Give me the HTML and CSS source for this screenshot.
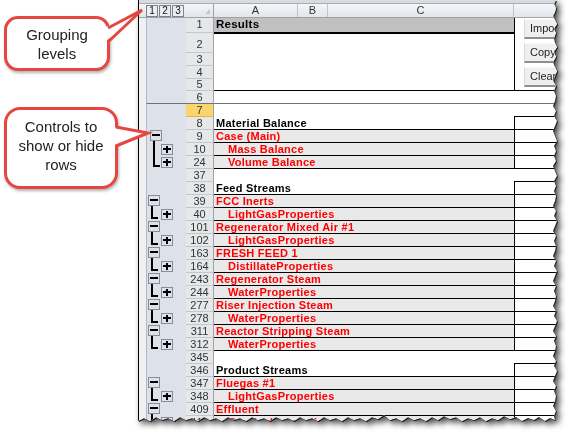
FILE: index.html
```html
<!DOCTYPE html>
<html>
<head>
<meta charset="utf-8">
<title>Grouping</title>
<link rel="stylesheet" href="styles.css">
</head>
<body>
<svg class="defs" xmlns="http://www.w3.org/2000/svg">
  <symbol id="mn" viewBox="0 0 40 13">
    <rect x="1.5" y="0.5" width="11" height="10" fill="none" stroke="#878c96"/>
    <rect x="3" y="4" width="8" height="2" fill="#000"/>
    <rect x="4" y="11" width="2" height="2" fill="#000"/>
  </symbol>
  <symbol id="mn1" viewBox="0 0 40 13">
    <rect x="3.5" y="0.5" width="11" height="10" fill="none" stroke="#878c96"/>
    <rect x="5" y="4" width="8" height="2" fill="#000"/>
    <rect x="6" y="11" width="2" height="2" fill="#000"/>
  </symbol>
  <symbol id="pe" viewBox="0 0 40 13">
    <rect x="4" y="0" width="2" height="11" fill="#000"/>
    <rect x="4" y="9" width="7" height="2" fill="#000"/>
    <rect x="14.5" y="1.5" width="11" height="10" fill="none" stroke="#878c96"/>
    <rect x="16" y="5" width="8" height="2" fill="#000"/>
    <rect x="19" y="3" width="2" height="7" fill="#000"/>
  </symbol>
  <symbol id="pm1" viewBox="0 0 40 13">
    <rect x="6" y="0" width="2" height="13" fill="#000"/>
    <rect x="14.5" y="1.5" width="11" height="10" fill="none" stroke="#878c96"/>
    <rect x="16" y="5" width="8" height="2" fill="#000"/>
    <rect x="19" y="3" width="2" height="7" fill="#000"/>
  </symbol>
  <symbol id="pe1" viewBox="0 0 40 13">
    <rect x="6" y="0" width="2" height="11" fill="#000"/>
    <rect x="6" y="9" width="7" height="2" fill="#000"/>
    <rect x="14.5" y="1.5" width="11" height="10" fill="none" stroke="#878c96"/>
    <rect x="16" y="5" width="8" height="2" fill="#000"/>
    <rect x="19" y="3" width="2" height="7" fill="#000"/>
  </symbol>
</svg>
<div class="page">
  <div class="notes">
    <div class="callout c1">
      <span class="ctext">Grouping<br>levels</span>
      <svg class="tail t1" width="150" height="80" viewBox="0 0 150 80">
        <polygon points="104,28 142,10 104,43" fill="#fff"/>
        <polyline points="108,28 142,10 108,42" fill="none" stroke="#e5463f" stroke-width="3" stroke-linejoin="miter"/>
      </svg>
    </div>
    <div class="callout c2">
      <span class="ctext">Controls to<br>show or hide<br>rows</span>
      <svg class="tail t2" width="160" height="200" viewBox="0 0 160 200">
        <polygon points="112,127 148,133 112,146" fill="#fff"/>
        <polyline points="116,127 148,133 116,146" fill="none" stroke="#e5463f" stroke-width="3" stroke-linejoin="miter"/>
      </svg>
    </div>
  </div>

  <div class="sheet-wrap">
    <div class="sheet">
      <div class="topstrip"></div>
      <div class="colhdr">
        <div class="hs"></div>
        <div class="levels"><span class="lv">1</span><span class="lv">2</span><span class="lv">3</span></div>
        <div class="corner"></div>
        <div class="ch">A</div>
        <div class="ch">B</div>
        <div class="ch">C</div>
        <div class="ch"></div>
      </div>

      <div class="top">
        <div class="s"></div>
        <div class="o"></div>
        <div class="rh tall">1</div>
        <div class="m res tall">Results</div>
        <div class="dblk">
          <div class="btn">Import</div>
          <div class="btn">Copy</div>
          <div class="btn">Clear</div>
        </div>
        <div class="rh tall">2</div>
        <div class="m r2"></div>
        <div class="rh">3</div>
        <div class="m"></div>
        <div class="rh">4</div>
        <div class="m"></div>
        <div class="rh">5</div>
        <div class="m r5"></div>
        <div class="rh fz">6</div>
        <div class="m fz"></div>
        <div class="d fz"></div>
      </div>

      <div class="row blank sel"><div class="s"></div><div class="o"></div><div class="rh">7</div><div class="m"></div><div class="d"></div></div>
      <div class="row hdr"><div class="s"></div><div class="o"></div><div class="rh">8</div><div class="m">Material Balance</div><div class="d"></div></div>
      <div class="row grp"><div class="s"></div><div class="o"><svg width="40" height="13"><use href="#mn1"/></svg></div><div class="rh">9</div><div class="m">Case (Main)</div><div class="d"></div></div>
      <div class="row grp"><div class="s"></div><div class="o"><svg width="40" height="13"><use href="#pm1"/></svg></div><div class="rh">10</div><div class="m sub">Mass Balance</div><div class="d"></div></div>
      <div class="row grp"><div class="s"></div><div class="o"><svg width="40" height="13"><use href="#pe1"/></svg></div><div class="rh">24</div><div class="m sub">Volume Balance</div><div class="d"></div></div>
      <div class="row blank"><div class="s"></div><div class="o"></div><div class="rh">37</div><div class="m"></div><div class="d"></div></div>
      <div class="row hdr"><div class="s"></div><div class="o"></div><div class="rh">38</div><div class="m">Feed Streams</div><div class="d"></div></div>
      <div class="row grp"><div class="s"></div><div class="o"><svg width="40" height="13"><use href="#mn"/></svg></div><div class="rh">39</div><div class="m">FCC Inerts</div><div class="d"></div></div>
      <div class="row grp"><div class="s"></div><div class="o"><svg width="40" height="13"><use href="#pe"/></svg></div><div class="rh">40</div><div class="m sub">LightGasProperties</div><div class="d"></div></div>
      <div class="row grp"><div class="s"></div><div class="o"><svg width="40" height="13"><use href="#mn"/></svg></div><div class="rh">101</div><div class="m">Regenerator Mixed Air #1</div><div class="d"></div></div>
      <div class="row grp"><div class="s"></div><div class="o"><svg width="40" height="13"><use href="#pe"/></svg></div><div class="rh">102</div><div class="m sub">LightGasProperties</div><div class="d"></div></div>
      <div class="row grp"><div class="s"></div><div class="o"><svg width="40" height="13"><use href="#mn"/></svg></div><div class="rh">163</div><div class="m">FRESH FEED 1</div><div class="d"></div></div>
      <div class="row grp"><div class="s"></div><div class="o"><svg width="40" height="13"><use href="#pe"/></svg></div><div class="rh">164</div><div class="m sub">DistillateProperties</div><div class="d"></div></div>
      <div class="row grp"><div class="s"></div><div class="o"><svg width="40" height="13"><use href="#mn"/></svg></div><div class="rh">243</div><div class="m">Regenerator Steam</div><div class="d"></div></div>
      <div class="row grp"><div class="s"></div><div class="o"><svg width="40" height="13"><use href="#pe"/></svg></div><div class="rh">244</div><div class="m sub">WaterProperties</div><div class="d"></div></div>
      <div class="row grp"><div class="s"></div><div class="o"><svg width="40" height="13"><use href="#mn"/></svg></div><div class="rh">277</div><div class="m">Riser Injection Steam</div><div class="d"></div></div>
      <div class="row grp"><div class="s"></div><div class="o"><svg width="40" height="13"><use href="#pe"/></svg></div><div class="rh">278</div><div class="m sub">WaterProperties</div><div class="d"></div></div>
      <div class="row grp"><div class="s"></div><div class="o"><svg width="40" height="13"><use href="#mn"/></svg></div><div class="rh">311</div><div class="m">Reactor Stripping Steam</div><div class="d"></div></div>
      <div class="row grp"><div class="s"></div><div class="o"><svg width="40" height="13"><use href="#pe"/></svg></div><div class="rh">312</div><div class="m sub">WaterProperties</div><div class="d"></div></div>
      <div class="row blank"><div class="s"></div><div class="o"></div><div class="rh">345</div><div class="m"></div><div class="d"></div></div>
      <div class="row hdr"><div class="s"></div><div class="o"></div><div class="rh">346</div><div class="m">Product Streams</div><div class="d"></div></div>
      <div class="row grp"><div class="s"></div><div class="o"><svg width="40" height="13"><use href="#mn"/></svg></div><div class="rh">347</div><div class="m">Fluegas #1</div><div class="d"></div></div>
      <div class="row grp"><div class="s"></div><div class="o"><svg width="40" height="13"><use href="#pe"/></svg></div><div class="rh">348</div><div class="m sub">LightGasProperties</div><div class="d"></div></div>
      <div class="row grp"><div class="s"></div><div class="o"><svg width="40" height="13"><use href="#mn"/></svg></div><div class="rh">409</div><div class="m">Effluent</div><div class="d"></div></div>
      <div class="row grp"><div class="s"></div><div class="o"><svg width="40" height="13"><use href="#pe"/></svg></div><div class="rh">410</div><div class="m sub">CrackedProperties</div><div class="d"></div></div>
    </div>
  </div>
</div>
</body>
</html>
```

FILE: styles.css
```css
* {
  box-sizing: border-box;
  margin: 0;
  padding: 0;
}

body {
  margin: 0;
  background: #fff;
  font-family: "Liberation Sans", Arial, sans-serif;
}

.defs {
  display: block;
  width: 0;
  height: 0;
  overflow: hidden;
}

.page {
  display: flex;
  width: 575px;
  height: 439px;
  overflow: hidden;
  background: #fff;
}

/* ---------- callouts ---------- */
.notes {
  width: 138px;
  flex: none;
  position: relative;
  z-index: 2;
  padding: 16px 0 0 4px;
  display: flex;
  flex-direction: column;
  align-items: flex-start;
}

.callout {
  position: relative;
  background: #fff;
  border: 3px solid #e5463f;
  border-radius: 14px;
  box-shadow: 1px 2px 3px rgba(0, 0, 0, 0.3);
  display: flex;
  align-items: center;
  justify-content: center;
  text-align: center;
  font-family: "Liberation Sans", Arial, sans-serif;
  font-size: 15px;
  line-height: 19px;
  color: #222;
}

.c1 {
  width: 106px;
  height: 55px;
}

.c2 {
  width: 114px;
  height: 82px;
  margin-top: 36px;
  border-radius: 16px;
  padding-bottom: 6px;
}

.ctext {
  position: relative;
  z-index: 1;
}

.tail {
  position: absolute;
  overflow: visible;
}

.t1 {
  left: -7px;
  top: -19px;
}

.t2 {
  left: -7px;
  top: -110px;
}

/* ---------- sheet ---------- */
.sheet-wrap {
  flex: none;
  filter: drop-shadow(1px 1px 0 #262626) drop-shadow(3px 3px 3px rgba(0, 0, 0, 0.7));
}

.sheet {
  width: 423px;
  height: 430px;
  border-left: 1px solid #000;
  background: #fff;
  display: flex;
  flex-direction: column;
  overflow: hidden;
  font-size: 11px;
  clip-path: polygon(0 0, 418px 0, 416px 4px, 418px 8px, 417px 12px, 415px 16px, 417px 20px, 419px 24px, 416px 29px, 418px 33px, 416px 38px, 417px 43px, 419px 47px, 416px 52px, 418px 57px, 415px 62px, 417px 67px, 419px 71px, 417px 76px, 415px 81px, 418px 86px, 416px 91px, 418px 96px, 417px 101px, 415px 106px, 418px 111px, 416px 116px, 419px 121px, 417px 126px, 415px 131px, 417px 136px, 419px 141px, 416px 146px, 418px 151px, 416px 156px, 418px 161px, 415px 166px, 417px 171px, 419px 176px, 416px 181px, 418px 186px, 416px 191px, 418px 196px, 417px 201px, 415px 206px, 418px 211px, 416px 216px, 419px 221px, 417px 226px, 415px 231px, 418px 236px, 416px 241px, 418px 246px, 417px 251px, 415px 256px, 418px 261px, 416px 266px, 419px 271px, 417px 276px, 415px 281px, 418px 286px, 416px 291px, 418px 296px, 417px 301px, 415px 306px, 418px 311px, 416px 316px, 419px 321px, 417px 326px, 415px 331px, 418px 336px, 416px 341px, 418px 346px, 417px 351px, 415px 356px, 418px 361px, 416px 366px, 419px 371px, 417px 376px, 415px 381px, 418px 386px, 416px 391px, 418px 396px, 417px 401px, 415px 406px, 418px 411px, 416px 416px, 417px 420px, 412px 418px, 407px 421px, 401px 417px, 396px 420px, 390px 418px, 384px 421px, 378px 417px, 372px 419px, 366px 416px, 360px 420px, 354px 418px, 348px 421px, 342px 417px, 336px 420px, 330px 418px, 324px 421px, 318px 417px, 312px 419px, 306px 416px, 300px 420px, 294px 417px, 288px 421px, 282px 418px, 276px 420px, 270px 417px, 264px 421px, 258px 418px, 252px 420px, 246px 415px, 240px 419px, 234px 417px, 228px 421px, 222px 418px, 216px 420px, 210px 417px, 204px 421px, 198px 418px, 192px 420px, 186px 417px, 180px 421px, 174px 418px, 168px 420px, 162px 417px, 156px 421px, 150px 418px, 144px 420px, 138px 417px, 132px 421px, 126px 418px, 120px 420px, 114px 417px, 108px 421px, 102px 418px, 96px 420px, 90px 417px, 84px 421px, 78px 418px, 72px 420px, 66px 417px, 60px 421px, 54px 418px, 48px 420px, 42px 417px, 36px 421px, 30px 418px, 24px 420px, 18px 417px, 12px 421px, 6px 418px, 0 421px);
}

.topstrip {
  flex: none;
  height: 4px;
  background: #d9dbe0;
  border-bottom: 1px solid #a6abb3;
}

.colhdr {
  flex: none;
  display: grid;
  grid-template-columns: 7px 40px 28px 84px 30px 186px 47px;
  height: 14px;
  border-bottom: 1px solid #9ea3ab;
  background: linear-gradient(#f5f6f8, #e2e5ea);
}

.levels {
  display: flex;
  gap: 1px;
  padding-top: 1px;
}

.lv {
  width: 12px;
  height: 12px;
  border: 1px solid #7d838c;
  background: #eceef2;
  font-size: 10px;
  line-height: 10px;
  text-align: center;
  color: #111;
}

.corner {
  position: relative;
  border-right: 1px solid #9ea3ab;
}

.corner::after {
  content: "";
  position: absolute;
  right: 3px;
  bottom: 3px;
  border-left: 5px solid transparent;
  border-bottom: 5px solid #c3c7ce;
}

.ch {
  border-right: 1px solid #c0c5cd;
  text-align: center;
  line-height: 13px;
  color: #333;
  font-size: 11px;
}

/* top frozen section */
.top {
  flex: none;
  display: grid;
  grid-template-columns: 7px 40px 28px 300px 47px;
  grid-template-rows: 15px 20px 13px 13px 12px 13px;
}

.top .s,
.top .o {
  grid-row: span 6;
}

.top .o {
  border-bottom: 1px solid #6f747c;
}

.s {
  background: #f0f0f0;
}

.o {
  background: #dde1ea;
  border-left: 1px solid #b4b9c4;
}

.o svg {
  display: block;
}

.rh {
  background: #e6e7e9;
  border-right: 1px solid #9ea3ab;
  border-bottom: 1px solid #c4c7cc;
  display: flex;
  align-items: flex-end;
  justify-content: center;
  line-height: 12px;
  color: #333;
  font-size: 11px;
}

.m {
  display: flex;
  align-items: flex-end;
  padding-left: 2px;
  line-height: 12px;
  font-weight: bold;
  font-size: 11px;
  letter-spacing: 0.25px;
  white-space: nowrap;
  color: #000;
}

.tall {
  padding-bottom: 2px;
}

.res {
  background: #c0c0c0;
  border-bottom: 1px solid #000;
  font-size: 11.5px;
}

.r2 {
  border-top: 1px solid #000;
}

.r5 {
  border-bottom: 1px solid #000;
}

.fz {
  border-bottom: 1px solid #6f747c;
}

.dblk {
  grid-row: span 5;
  border-left: 1px solid #000;
  border-bottom: 1px solid #000;
  padding: 1px 0 0 9px;
  display: flex;
  flex-direction: column;
  gap: 4px;
}

.btn {
  height: 20px;
  width: 60px;
  background: #efefef;
  border-top: 1px solid #fafafa;
  border-left: 1px solid #d6d6d6;
  border-bottom: 2px solid #8f8f8f;
  padding-left: 5px;
  font-size: 11px;
  line-height: 17px;
  color: #222;
}

/* body rows */
.row {
  flex: none;
  display: grid;
  grid-template-columns: 7px 40px 28px 300px 47px;
  height: 13px;
}

.sel .rh {
  background: #f9d56c;
  border-bottom-color: #e0b850;
}

.blank .d {
  border-bottom: 1px solid #000;
}

.hdr .m {
  border-bottom: 1px solid #000;
}

.hdr .d,
.grp .d {
  border-left: 1px solid #000;
  border-bottom: 1px solid #000;
}

.grp .m {
  background: #e9e9e9;
  border-bottom: 1px solid #000;
  color: #f00;
}

.m.sub {
  padding-left: 14px;
}
```
